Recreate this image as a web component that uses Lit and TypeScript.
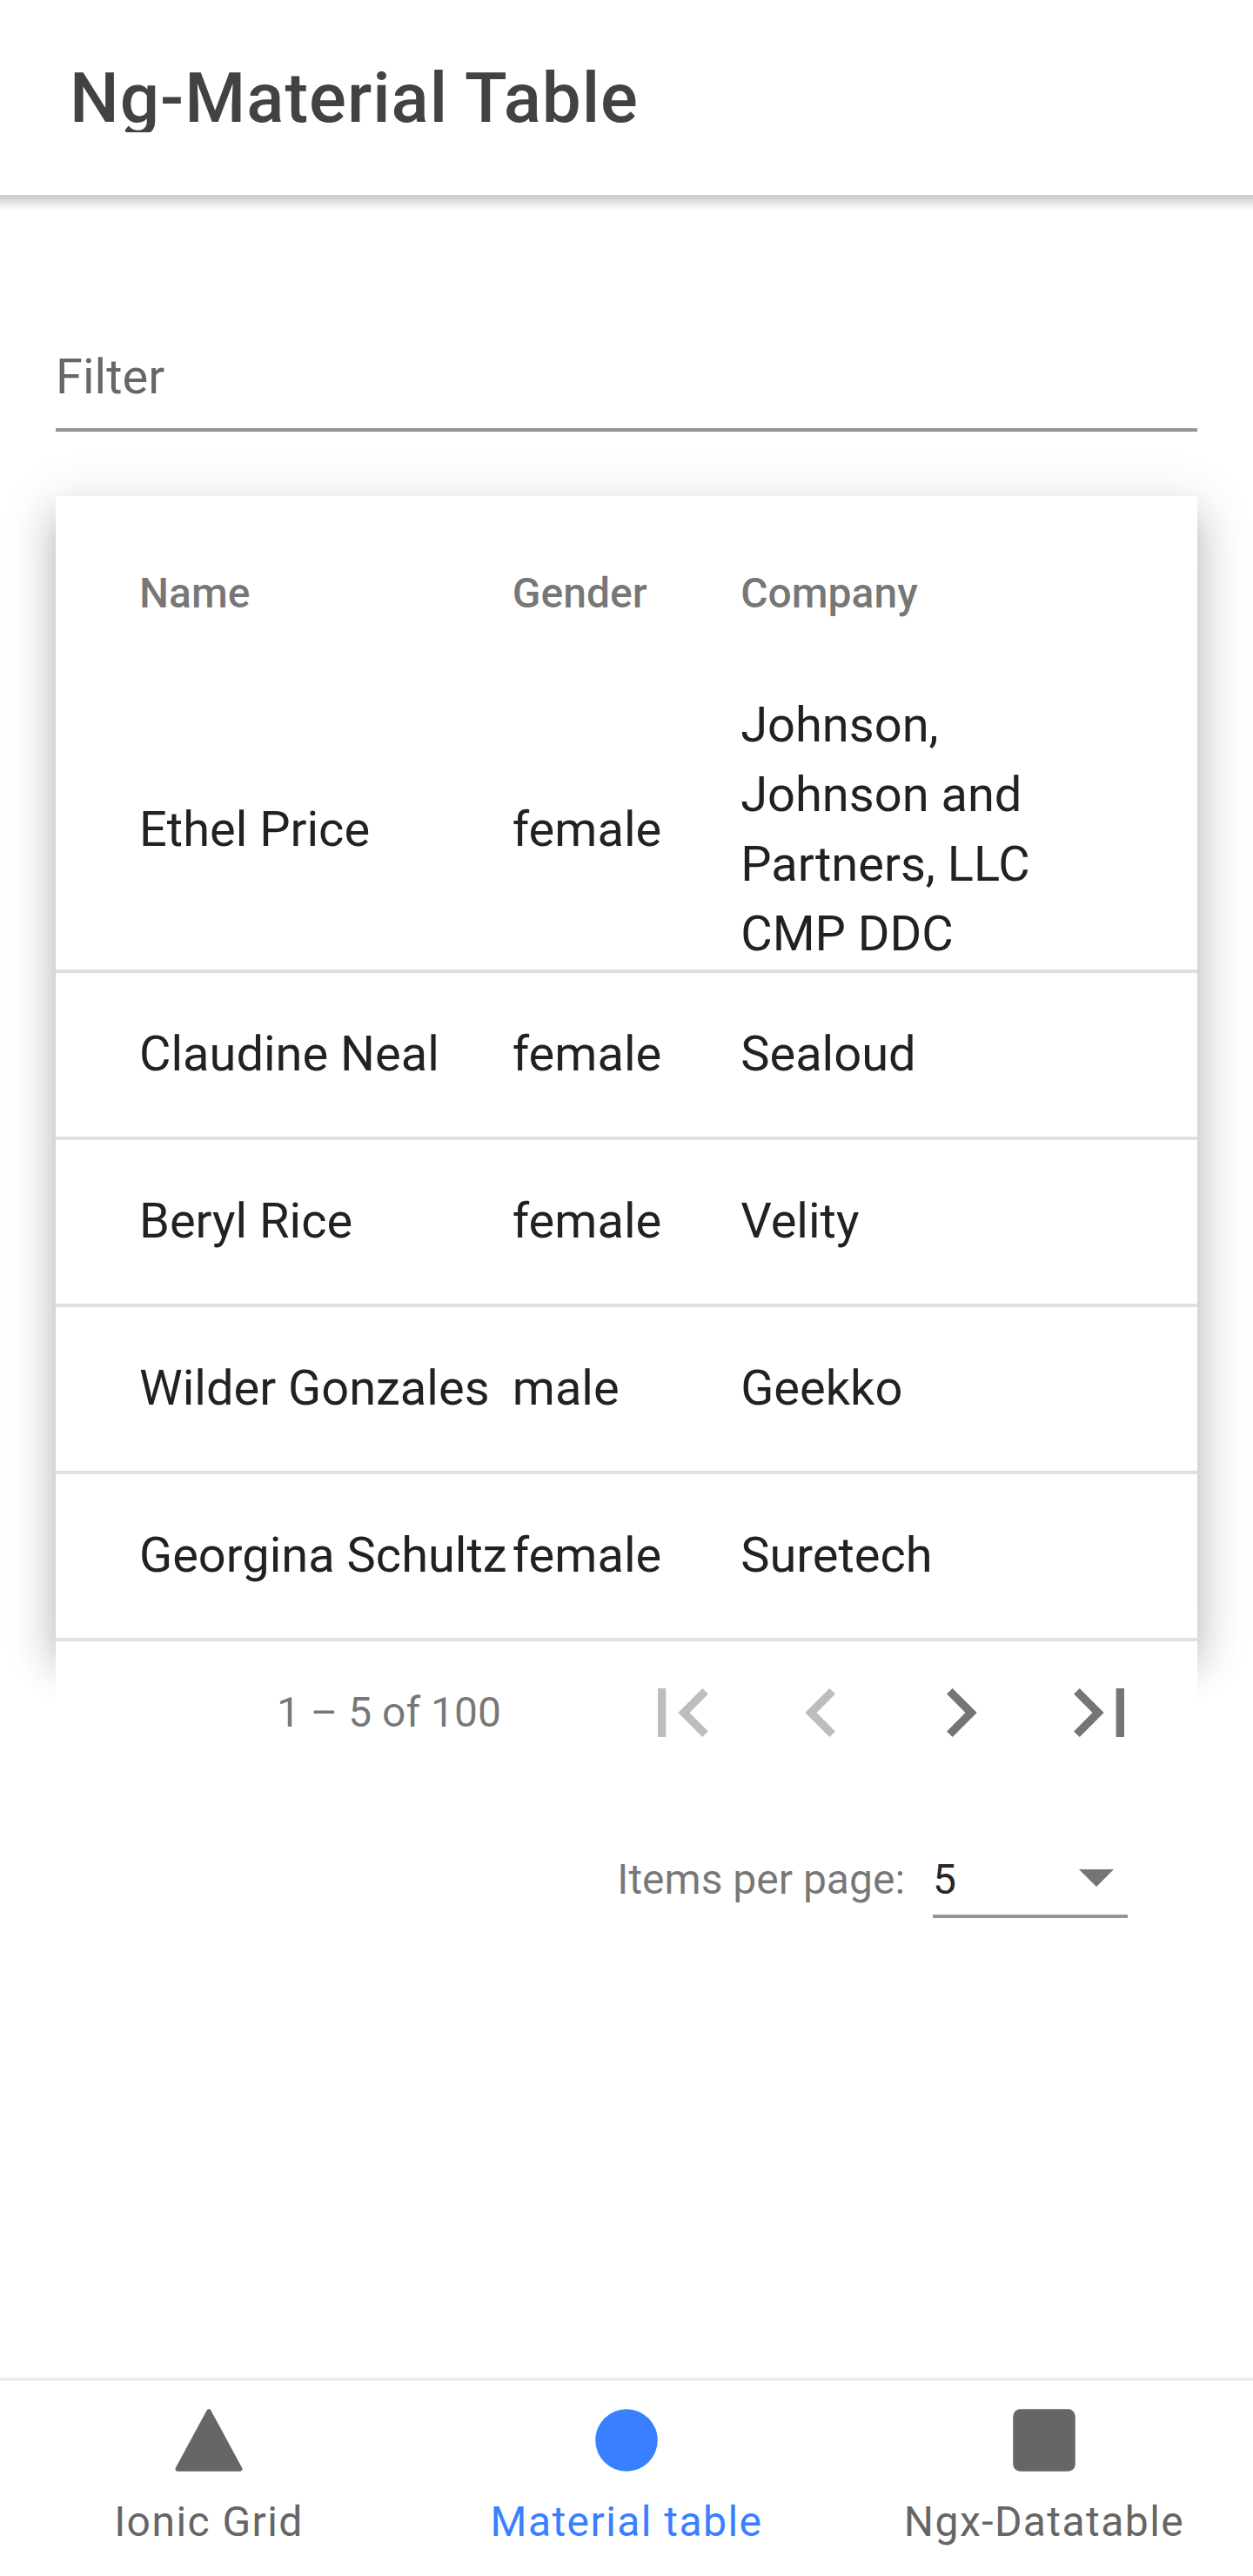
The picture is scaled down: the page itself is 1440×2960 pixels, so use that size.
import { LitElement, html, css, svg } from "lit";
import { customElement, state } from "lit/decorators.js";

interface Person {
  name: string;
  gender: string;
  company: string;
}

const people: Person[] = [
  { name: "Ethel Price", gender: "female", company: "Johnson, Johnson and Partners, LLC CMP DDC" },
  { name: "Claudine Neal", gender: "female", company: "Sealoud" },
  { name: "Beryl Rice", gender: "female", company: "Velity" },
  { name: "Wilder Gonzales", gender: "male", company: "Geekko" },
  { name: "Georgina Schultz", gender: "female", company: "Suretech" },
];

const pagerButtons = [
  { label: "First page", disabled: true, path: "M18.41 16.59L13.82 12l4.59-4.59L17 6l-6 6 6 6zM6 6h2v12H6z" },
  { label: "Previous page", disabled: true, path: "M15.41 7.41L14 6l-6 6 6 6 1.41-1.41L10.83 12z" },
  { label: "Next page", disabled: false, path: "M10 6L8.59 7.41 13.17 12l-4.58 4.59L10 18l6-6z" },
  { label: "Last page", disabled: false, path: "M5.59 7.41L10.18 12l-4.59 4.59L7 18l6-6-6-6zM16 6h2v12h-2z" },
];

const tabs = [
  {
    label: "Ionic Grid",
    shape: svg`<path d="M464 464H48a16 16 0 01-14.07-23.62l208-384a16 16 0 0128.14 0l208 384A16 16 0 01464 464z"/>`,
  },
  { label: "Material table", shape: svg`<circle cx="256" cy="256" r="208"/>` },
  { label: "Ngx-Datatable", shape: svg`<rect x="48" y="48" width="416" height="416" rx="48"/>` },
];

@customElement("app-header")
class AppHeader extends LitElement {
  static styles = css`
    :host {
      display: block;
      position: relative;
      z-index: 1;
      flex: none;
    }
    .bar {
      display: flex;
      align-items: center;
      height: 224px;
      padding: 0 80px;
      box-sizing: border-box;
      background: #fff;
    }
    .title {
      margin: 0;
      height: 80px;
      overflow: hidden;
      font-size: 80px;
      font-weight: 500;
      line-height: 82px;
      letter-spacing: 0.0125em;
      white-space: nowrap;
      color: #424242;
    }
    .shade {
      position: absolute;
      top: 100%;
      left: 0;
      width: 100%;
      height: 20px;
      background: linear-gradient(rgba(0, 0, 0, 0.2), rgba(0, 0, 0, 0.16) 25%, rgba(0, 0, 0, 0.09) 50%, rgba(0, 0, 0, 0.03) 75%, transparent);
    }
  `;
  render() {
    return html`<header class="bar"><h1 class="title">Ng-Material Table</h1></header>
      <div class="shade"></div>`;
  }
}

@customElement("people-table")
class PeopleTable extends LitElement {
  static styles = css`
    :host {
      display: block;
      background: #fff;
      box-shadow: 0 20px 20px -12px rgba(0, 0, 0, 0.2), 0 32px 40px 4px rgba(0, 0, 0, 0.14),
        0 12px 56px 8px rgba(0, 0, 0, 0.12);
    }
    .row {
      display: grid;
      grid-template-columns: 2fr 1fr 2fr;
      align-items: center;
      min-height: 192px;
      box-sizing: border-box;
      border-bottom: 4px solid #e0e0e0;
      font-size: 56px;
      line-height: 80px;
      color: rgba(0, 0, 0, 0.87);
    }
    .cell {
      margin: -1px 0 1px;
    }
    .head {
      min-height: 224px;
      border-bottom: 0;
      font-size: 48px;
      font-weight: 500;
      line-height: 57px;
      color: rgba(0, 0, 0, 0.54);
    }
    .head .cell {
      margin-top: 0;
    }
    .name {
      padding-left: 96px;
      white-space: nowrap;
    }
    .company {
      padding-right: 96px;
    }
  `;
  render() {
    return html`
      <div class="row head">
        <div class="cell name">Name</div>
        <div class="cell">Gender</div>
        <div class="cell company">Company</div>
      </div>
      ${people.map(
        (p) => html`<div class="row">
          <div class="cell name">${p.name}</div>
          <div class="cell">${p.gender}</div>
          <div class="cell company">${p.company}</div>
        </div>`
      )}
    `;
  }
}

@customElement("table-paginator")
class TablePaginator extends LitElement {
  static styles = css`
    :host {
      display: flex;
      flex-direction: column;
      align-items: flex-end;
      position: relative;
      padding: 2px 32px 0;
      background: #fff;
      font-size: 48px;
      line-height: 57px;
      color: rgba(0, 0, 0, 0.54);
    }
    .range,
    .size {
      display: flex;
      align-items: center;
    }
    .label {
      padding-bottom: 1px;
    }
    .range .label {
      margin-right: 128px;
    }
    .button {
      width: 160px;
      height: 160px;
      padding: 24px;
      box-sizing: border-box;
      border: 0;
      background: none;
      color: #757575;
    }
    .button:disabled {
      color: #bdbdbd;
    }
    .icon {
      display: block;
      width: 112px;
      height: 112px;
      fill: currentColor;
    }
    .size {
      margin: 68px 48px 0 0;
      height: 88px;
      gap: 32px;
    }
    .select {
      display: flex;
      align-items: center;
      justify-content: space-between;
      width: 224px;
      height: 88px;
      padding-right: 16px;
      box-sizing: border-box;
      border-bottom: 4px solid #949494;
      color: rgba(0, 0, 0, 0.87);
    }
    .value {
      padding-top: 3px;
    }
    .arrow {
      border: 20px solid transparent;
      border-top-color: #757575;
      border-bottom: 0;
    }
  `;
  render() {
    return html`
      <div class="range">
        <div class="label">1 – 5 of 100</div>
        ${pagerButtons.map(
          (b) => html`<button class="button" aria-label=${b.label} ?disabled=${b.disabled}>
            <svg class="icon" viewBox="0 0 24 24"><path d=${b.path} /></svg>
          </button>`
        )}
      </div>
      <div class="size">
        <div class="label">Items per page:</div>
        <div class="select"><span class="value">5</span><span class="arrow"></span></div>
      </div>
    `;
  }
}

@customElement("tab-bar")
class TabBar extends LitElement {
  @state() private selected = 1;

  static styles = css`
    :host {
      display: grid;
      grid-template-columns: repeat(3, 1fr);
      flex: none;
      height: 228px;
      box-sizing: border-box;
      border-top: 4px solid #ededed;
      background: #fff;
    }
    .tab {
      display: flex;
      flex-direction: column;
      align-items: center;
      gap: 21px;
      padding: 24px 0 0;
      border: 0;
      background: none;
      font: 400 48px/57px Roboto, sans-serif;
      letter-spacing: 0.03em;
      color: #666;
    }
    .tab.selected {
      color: #3880ff;
    }
    .icon {
      width: 88px;
      height: 88px;
      fill: currentColor;
    }
  `;
  render() {
    return tabs.map(
      (t, i) => html`<button class="tab ${i === this.selected ? "selected" : ""}" @click=${() => (this.selected = i)}>
        <svg class="icon" viewBox="0 0 512 512">${t.shape}</svg>
        <span>${t.label}</span>
      </button>`
    );
  }
}

@customElement("app-root")
class AppRoot extends LitElement {
  static styles = css`
    :host {
      display: flex;
      flex-direction: column;
      width: 1440px;
      height: 2960px;
      overflow: hidden;
      background: #fff;
      font-family: Roboto, sans-serif;
    }
    .content {
      flex: 1;
      padding: 168px 64px 0;
    }
    .filter {
      display: flex;
      align-items: flex-start;
      height: 104px;
      margin-bottom: 74px;
      padding-top: 1px;
      box-sizing: border-box;
      border-bottom: 4px solid #949494;
      font-size: 56px;
      line-height: 80px;
      color: rgba(0, 0, 0, 0.6);
    }
  `;
  render() {
    return html`
      <app-header></app-header>
      <main class="content">
        <div class="filter">Filter</div>
        <people-table></people-table>
        <table-paginator></table-paginator>
      </main>
      <tab-bar></tab-bar>
    `;
  }
}
